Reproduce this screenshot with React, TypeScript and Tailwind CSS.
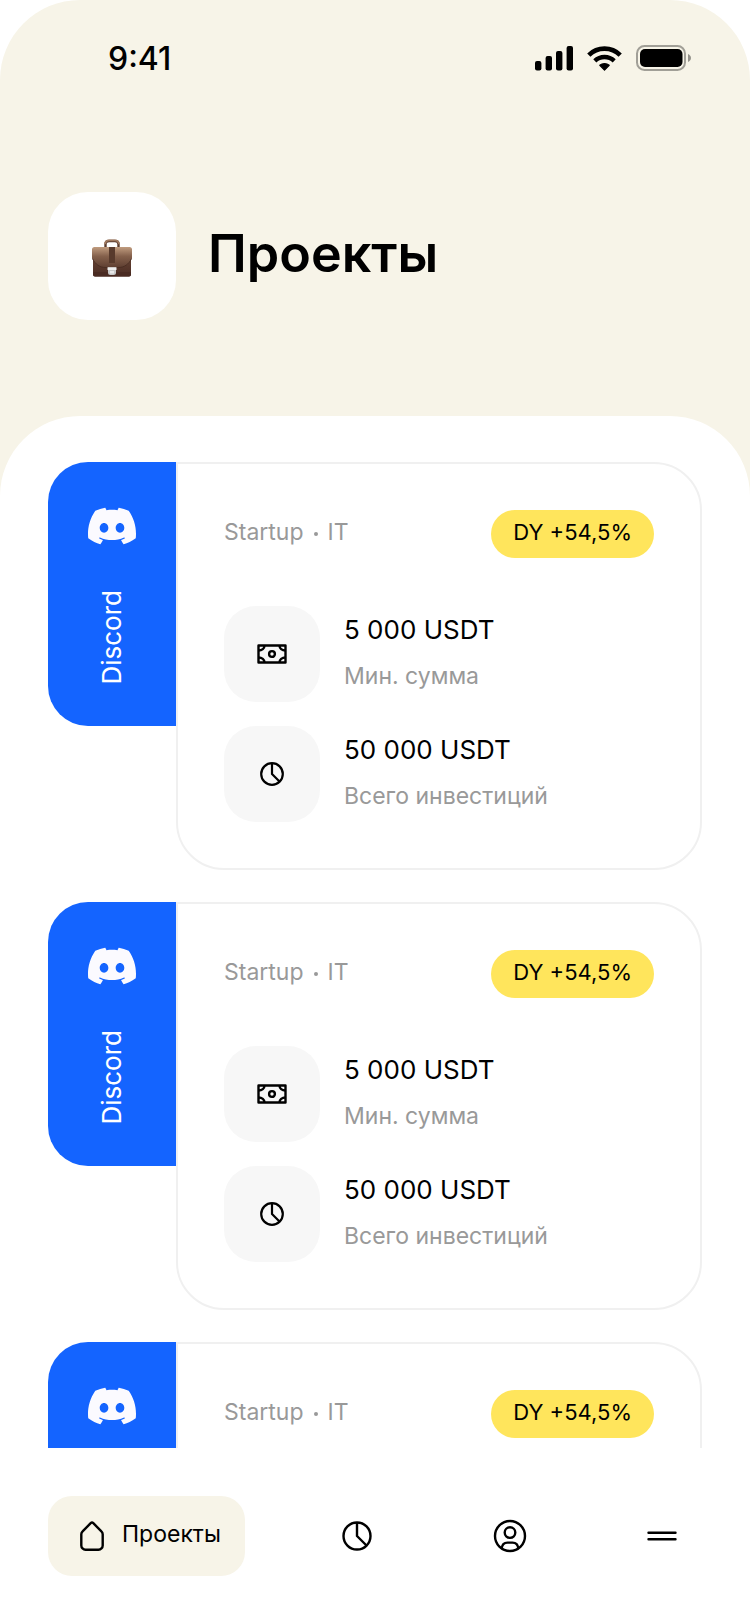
import { ReactNode } from "react";
import { SiDiscord } from "react-icons/si";

const projects = [
  { id: 1, name: "Discord", stage: "Startup", sector: "IT", yield: "DY +54,5%", min: "5 000 USDT", total: "50 000 USDT" },
  { id: 2, name: "Discord", stage: "Startup", sector: "IT", yield: "DY +54,5%", min: "5 000 USDT", total: "50 000 USDT" },
  { id: 3, name: "Discord", stage: "Startup", sector: "IT", yield: "DY +54,5%", min: "5 000 USDT", total: "50 000 USDT" },
];

type Project = (typeof projects)[number];

const SignalIcon = () => (
  <svg width="38" height="25" viewBox="0 0 38 25" aria-hidden="true">
    <rect x="0" y="15" width="6.4" height="9.5" rx="2" />
    <rect x="10.6" y="10" width="6.4" height="14.5" rx="2" />
    <rect x="21" y="5" width="6.4" height="19.5" rx="2" />
    <rect x="31.6" y="0" width="6.4" height="24.5" rx="2" />
  </svg>
);

const WifiIcon = () => (
  <svg width="35" height="25" viewBox="0 0 35 25" fill="none" stroke="#000" aria-hidden="true">
    <path d="M1.8 9.1a22.3 22.3 0 0 1 31.4 0" strokeWidth="4.6" />
    <path d="M7.8 14.9a14 14 0 0 1 19.4 0" strokeWidth="4.4" />
    <path
      d="M17.5 24.2l-4.7-4.9a7 7 0 0 1 9.4 0z"
      fill="#000"
      strokeWidth="1.2"
      strokeLinejoin="round"
    />
  </svg>
);

const BatteryIcon = () => (
  <svg width="56" height="26" viewBox="0 0 56 26" aria-hidden="true">
    <rect x="1" y="1" width="48" height="24" rx="7.5" fill="none" stroke="#000" strokeOpacity="0.35" strokeWidth="2" />
    <rect x="4" y="4" width="42.5" height="18" rx="5" />
    <path d="M52 9c1.9.8 3 2.3 3 4s-1.1 3.2-3 4z" fillOpacity="0.4" />
  </svg>
);

const BriefcaseIcon = () => (
  <svg width="40" height="38" viewBox="0 0 40 38" aria-hidden="true">
    <defs>
      <linearGradient id="leather" x1="0" y1="0" x2="0" y2="1">
        <stop offset="0" stopColor="#6b4636" />
        <stop offset="1" stopColor="#4b2d24" />
      </linearGradient>
      <linearGradient id="flap" x1="0" y1="0" x2="0" y2="1">
        <stop offset="0" stopColor="#c09c7f" />
        <stop offset="0.45" stopColor="#84604b" />
        <stop offset="1" stopColor="#5e3e31" />
      </linearGradient>
    </defs>
    <path d="M13.5 9V5.2C13.5 3 15 2 17 2h6c2 0 3.5 1 3.5 3.2V9" fill="none" stroke="#5a3b2d" strokeWidth="2.4" />
    <path d="M13 5.2C13.3 2.5 14.7 1.4 17 1.4h6c2.3 0 3.7 1.1 4 3.8" fill="none" stroke="#a07a60" strokeWidth="1.8" />
    <rect x="1" y="14" width="38" height="23.5" rx="2" fill="url(#leather)" />
    <path d="M1 33h38v2.5a2 2 0 0 1-2 2H3a2 2 0 0 1-2-2z" fill="#4a2b22" />
    <path d="M2.5 8h35A2.5 2.5 0 0 1 40 10.5V19c-2.5 6.5-8.5 9.7-13 9.7H13C8.5 28.7 2.5 25.5 0 19v-8.5A2.5 2.5 0 0 1 2.5 8z" fill="url(#flap)" />
    <path d="M.5 19.5c2.5 6 8 9 12.5 9h14c4.5 0 10-3 12.5-9" fill="none" stroke="#452a20" strokeWidth="0.8" />
    <path d="M17 8h6v16h-6z" fill="#583a2c" />
    <path d="M16 28.5h8v5a2.5 2.5 0 0 1-2.5 2.5h-3a2.5 2.5 0 0 1-2.5-2.5z" fill="#c8c8c8" />
    <path d="M15.5 28.3h9V31h-9z" fill="#efefef" />
    <path d="M18 32h4v2.5h-4z" fill="#e9e9e9" />
  </svg>
);

const MoneyIcon = () => (
  <svg width="30" height="20" viewBox="0 0 30 20" fill="none" stroke="#000" strokeWidth="2.4" aria-hidden="true">
    <rect x="1.5" y="1.5" width="27" height="17" strokeLinejoin="round" />
    <circle cx="15" cy="10" r="2.9" />
    <path d="M7.5 1.5c0 2.8-2.5 5-6 5M22.5 1.5c0 2.8 2.5 5 6 5M7.5 18.5c0-2.8-2.5-5-6-5M22.5 18.5c0-2.8 2.5-5 6-5" />
  </svg>
);

const PieIcon = () => (
  <svg width="30" height="30" viewBox="0 0 30 30" fill="none" stroke="#000" strokeWidth="2.4" aria-hidden="true">
    <circle cx="15" cy="15" r="13.5" />
    <path d="M15 1.5V15l9.5 9.5" strokeLinejoin="round" />
  </svg>
);

const SmallPieIcon = () => (
  <svg width="24" height="24" viewBox="0 0 24 24" fill="none" stroke="#000" strokeWidth="2.2" aria-hidden="true">
    <circle cx="12" cy="12" r="10.8" />
    <path d="M12 1v11l7.5 7.5" strokeLinejoin="round" />
  </svg>
);

const HomeIcon = () => (
  <svg width="24" height="30" viewBox="0 0 24 30" fill="none" stroke="#000" strokeWidth="2.4" aria-hidden="true">
    <path
      d="M10.7 2.2L2.6 10.3a4 4 0 0 0-1.3 2.9V24.500a4.200 4.200 0 0 0 4.200 4.200h13a4.200 4.200 0 0 0 4.200-4.200V13.200a4 4 0 0 0-1.300-2.900L13.300 2.200a1.900 1.900 0 0 0-2.600 0z"
      strokeLinejoin="round"
    />
  </svg>
);

const UserIcon = () => (
  <svg width="34" height="34" viewBox="0 0 34 34" fill="none" stroke="#000" strokeWidth="2.4" aria-hidden="true">
    <circle cx="17" cy="17" r="15" />
    <circle cx="17" cy="13.6" r="5.3" />
    <path d="M8.7 29.5c.3-3.800 2.600-5.900 5.800-5.900h5c3.200 0 5.500 2.100 5.800 5.900" />
  </svg>
);

const MenuIcon = () => (
  <svg width="30" height="12" viewBox="0 0 30 12" stroke="#000" strokeWidth="2.4" strokeLinecap="round" aria-hidden="true">
    <path d="M1.5 2.7h27M1.5 9.3h27" />
  </svg>
);

const Stat = ({ icon, value, label }: { icon: ReactNode; value: string; label: string }) => (
  <div className="flex items-center gap-6">
    <div className="flex size-24 shrink-0 items-center justify-center rounded-[32px] bg-[#f7f7f7]">
      {icon}
    </div>
    <div className="flex flex-col gap-4 pb-1">
      <div className="text-[26px] leading-8 text-black">{value}</div>
      <div className="text-[23px] leading-7 text-[#999999]">{label}</div>
    </div>
  </div>
);

const ProjectCard = ({ project }: { project: Project }) => (
  <article className="flex items-start">
    <div className="flex h-[264px] w-32 shrink-0 flex-col items-center gap-10 rounded-l-[40px] bg-[#1464ff] pt-10">
      <SiDiscord className="size-12 text-[#fbfaff]" />
      <h2 className="rotate-180 text-[26px] leading-8 text-white [writing-mode:vertical-rl]">
        {project.name}
      </h2>
    </div>
    <div className="flex-1 rounded-r-[48px] rounded-bl-[48px] border-2 border-[#f0f0f0] p-[46px]">
      <div className="mb-12 flex items-center justify-between">
        <div className="flex items-center gap-[10px] pb-1 text-[23px] leading-7 text-[#999999]">
          <span>{project.stage}</span>
          <span className="mt-1 size-1 rounded-full bg-[#999999]" />
          <span>{project.sector}</span>
        </div>
        <div className="flex h-12 items-center rounded-full bg-[#ffe55c] px-[22px] pb-1 text-[22px] text-black">
          {project.yield}
        </div>
      </div>
      <div className="flex flex-col gap-6">
        <Stat icon={<MoneyIcon />} value={project.min} label="Мин. сумма" />
        <Stat icon={<SmallPieIcon />} value={project.total} label="Всего инвестиций" />
      </div>
    </div>
  </article>
);

const StatusBar = () => (
  <div className="flex h-[116px] items-center justify-between pr-[58px] pl-[108px]">
    <span className="pt-0.5 text-[32px] font-medium">9:41</span>
    <div className="flex items-center gap-[14px]">
      <SignalIcon />
      <WifiIcon />
      <BatteryIcon />
    </div>
  </div>
);

const NavBar = () => (
  <nav className="flex h-44 shrink-0 items-center justify-between bg-white px-12">
    <button
      type="button"
      aria-current="page"
      className="flex h-20 items-center gap-[18px] rounded-3xl bg-[#f7f4e8] pr-6 pl-8 text-[23px]"
    >
      <HomeIcon />
      <span className="pb-1">Проекты</span>
    </button>
    <button type="button" aria-label="Инвестиции" className="flex size-20 items-center justify-center">
      <PieIcon />
    </button>
    <button type="button" aria-label="Профиль" className="flex size-20 items-center justify-center">
      <UserIcon />
    </button>
    <button type="button" aria-label="Меню" className="flex size-20 items-center justify-center">
      <MenuIcon />
    </button>
  </nav>
);

export default function App() {
  return (
    <div className="flex h-screen flex-col overflow-hidden rounded-t-[80px] bg-[#f7f4e8] font-['Inter',sans-serif] text-black">
      <header className="h-[416px] shrink-0">
        <StatusBar />
        <div className="mt-[76px] flex items-center gap-8 px-12">
          <div className="flex size-32 items-center justify-center rounded-[40px] bg-white pt-1">
            <BriefcaseIcon />
          </div>
          <h1 className="pb-1 text-[52px] leading-[64px] font-semibold">Проекты</h1>
        </div>
      </header>
      <main className="flex min-h-0 flex-1 flex-col gap-8 overflow-y-auto rounded-t-[80px] bg-white px-12 pt-[46px] [scrollbar-width:none]">
        {projects.map((project) => (
          <ProjectCard key={project.id} project={project} />
        ))}
      </main>
      <NavBar />
    </div>
  );
}
